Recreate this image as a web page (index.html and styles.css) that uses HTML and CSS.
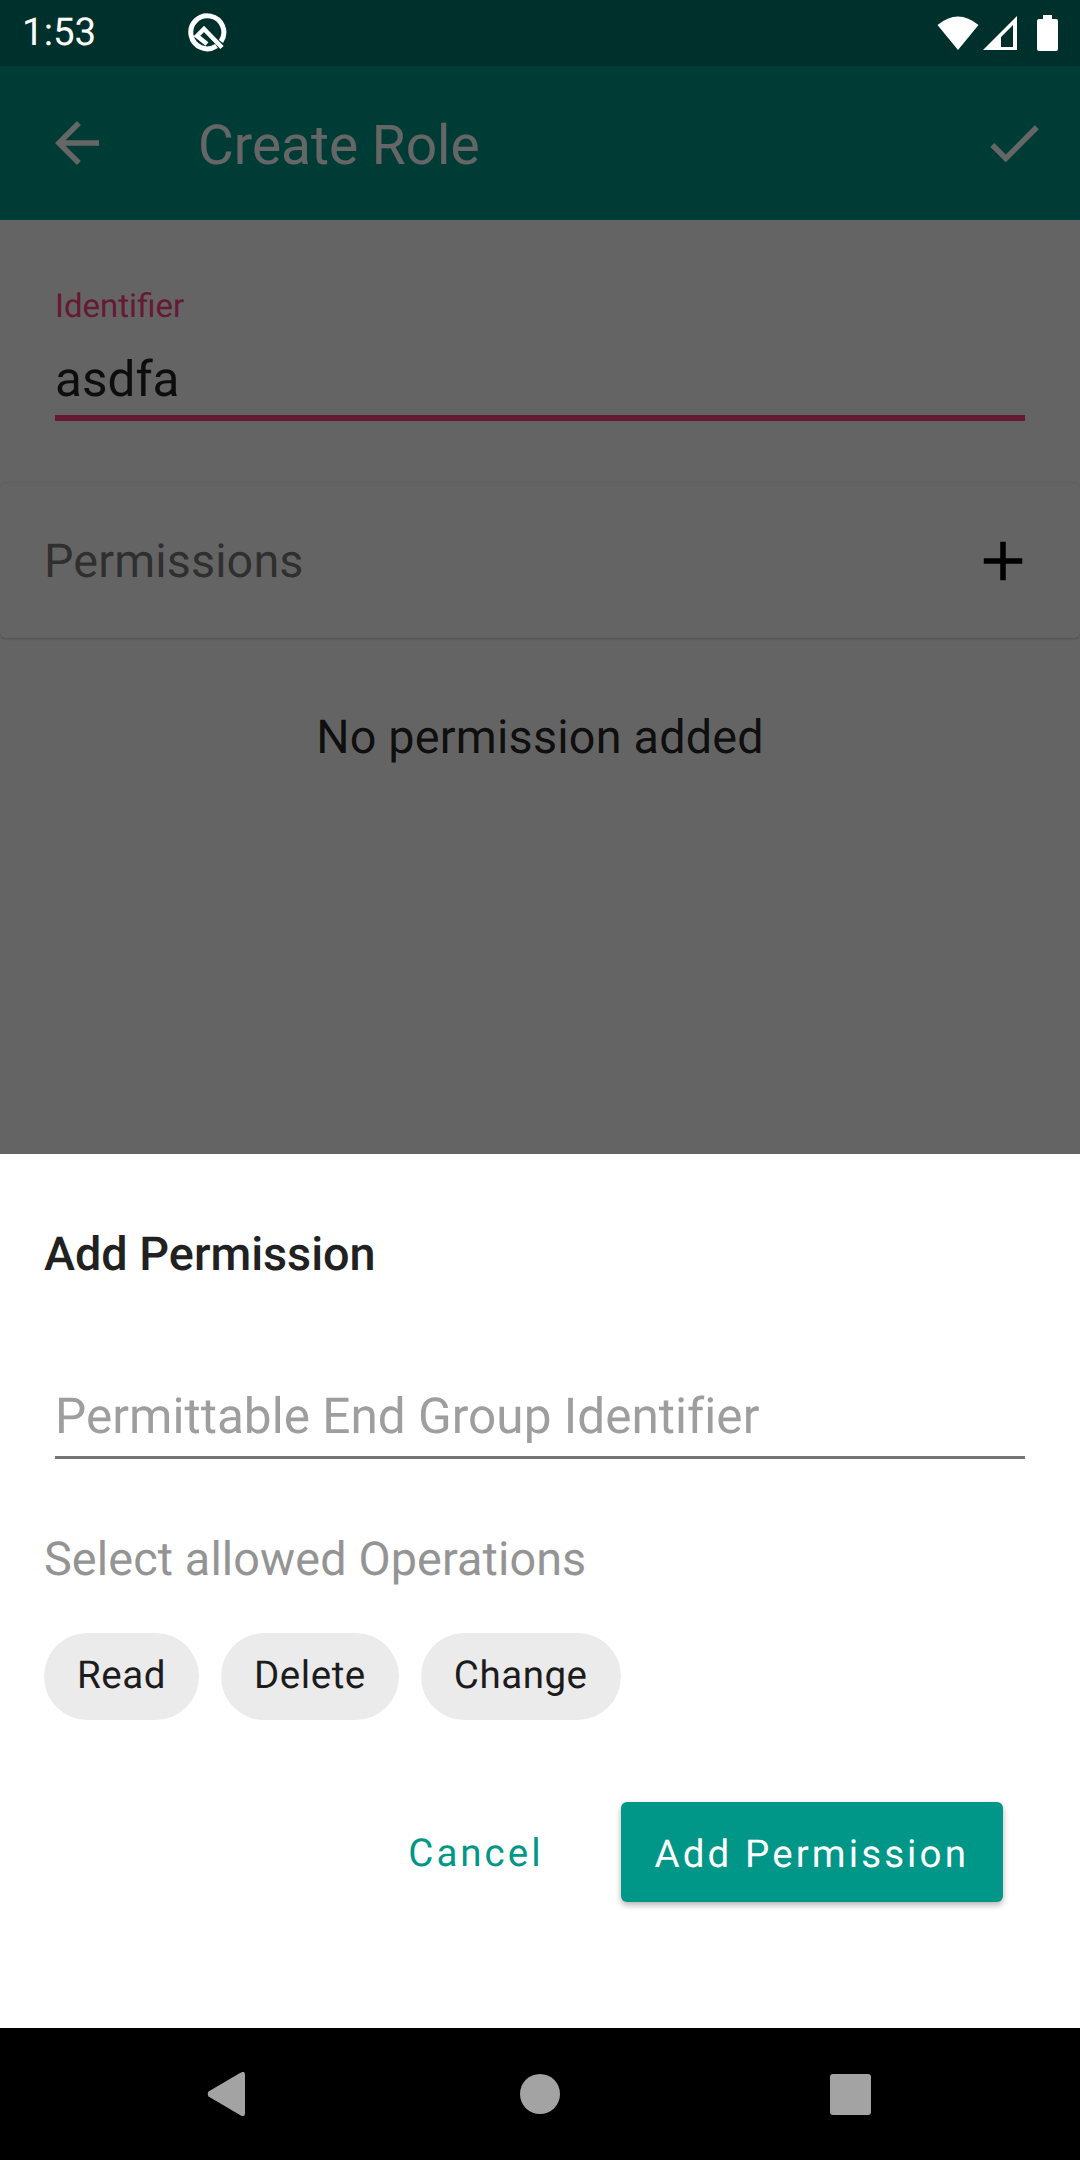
FILE: index.html
```html
<!DOCTYPE html>
<html lang="en">
<head>
<meta charset="utf-8">
<title>Create Role</title>
<link rel="stylesheet" href="styles.css">
</head>
<body>
<div class="screen">
  <div class="behind">
    <div class="status-bar">
      <div class="status-left">
        <span class="time">1:53</span>
        <svg class="q-icon" viewBox="0 0 40 40" width="40" height="40"><path class="q-ring" d="M29.500 33A16.500 16.500 0 1 1 34 28.500"/><path class="q-mark" d="M35 34.500 17 16 10 23 20 31"/></svg>
      </div>
      <div class="status-right">
        <svg viewBox="0 0 42 36" width="42" height="36"><path class="white" d="M21 35 0.500 10Q21 -7 41.500 10z"/></svg>
        <svg class="signal" viewBox="0 0 34 34" width="34" height="34"><path class="white" fill-rule="evenodd" d="M34 0V34H0zM30 9 18 21V31H30z"/></svg>
        <svg class="battery" viewBox="0 0 21 36" width="21" height="36"><path class="white" d="M6 0h9v4h4a2 2 0 0 1 2 2v28a2 2 0 0 1-2 2H2a2 2 0 0 1-2-2V6a2 2 0 0 1 2-2h4z"/></svg>
      </div>
    </div>
    <header class="app-bar">
      <svg class="bar-icon" viewBox="0 0 24 24" width="66" height="66"><path d="M20 11H7.830l5.590-5.590L12 4l-8 8 8 8 1.410-1.410L7.830 13H20v-2z"/></svg>
      <h1 class="bar-title">Create Role</h1>
      <svg class="bar-icon" viewBox="0 0 24 24" width="66" height="66"><path d="M9 16.170L4.830 12l-1.420 1.410L9 19 21 7l-1.410-1.410z"/></svg>
    </header>
    <main class="content">
      <div class="field">
        <div class="field-label">Identifier</div>
        <div class="field-value">asdfa</div>
      </div>
      <section class="card">
        <span class="card-title">Permissions</span>
        <svg class="add-icon" viewBox="0 0 24 24" width="66" height="66"><path d="M19 13h-6v6h-2v-6H5v-2h6V5h2v6h6v2z"/></svg>
      </section>
      <p class="empty">No permission added</p>
    </main>
    <div class="scrim"></div>
  </div>
  <section class="sheet">
    <h2 class="sheet-title">Add Permission</h2>
    <div class="input">Permittable End Group Identifier</div>
    <div class="ops-label">Select allowed Operations</div>
    <div class="chips">
      <span class="chip">Read</span>
      <span class="chip">Delete</span>
      <span class="chip">Change</span>
    </div>
    <div class="actions">
      <span class="btn-text">Cancel</span>
      <span class="btn-primary">Add Permission</span>
    </div>
  </section>
  <nav class="nav-bar">
    <svg viewBox="0 0 38 44" width="38" height="44"><path class="nav" d="M38 3V41Q38 46 33 43L1.500 24.500Q0 22 1.500 19.500L33 1Q38 -2 38 3z"/></svg>
    <svg viewBox="0 0 40 40" width="40" height="40"><circle class="nav" cx="20" cy="20" r="20"/></svg>
    <svg viewBox="0 0 41 41" width="41" height="41"><rect class="nav" width="41" height="41" rx="3"/></svg>
  </nav>
</div>
</body>
</html>
```
FILE: styles.css
```css
* { box-sizing: border-box; }
html, body { margin: 0; padding: 0; }
body { font-family: Roboto, "Liberation Sans", sans-serif; background: #000; text-rendering: geometricPrecision; }
.screen { width: 1080px; height: 2160px; display: flex; flex-direction: column; overflow: hidden; }
.behind { position: relative; height: 1154px; background: #fafafa; flex: none; }
.scrim { position: absolute; inset: 0; background: rgba(0,0,0,.6); }

.status-bar { position: relative; z-index: 2; height: 66px; display: flex; align-items: center; justify-content: space-between; padding: 0 22px 0 22px; }
.behind::before { content: ""; position: absolute; left: 0; top: 0; width: 100%; height: 66px; background: #00796b; }
.status-left { display: flex; align-items: center; }
.time { font-size: 38.5px; color: #fff; width: 165px; line-height: 70px; }
.q-icon { display: block; }
.status-right { display: flex; align-items: center; }
.status-right svg { display: block; }
.signal { margin-left: 4px; }
.battery { margin-left: 20px; }
.white { fill: #fff; }
.q-ring { fill: none; stroke: #fff; stroke-width: 5; }
.q-mark { fill: none; stroke: #fff; stroke-width: 4.500; }

.app-bar { height: 154px; background: #009688; display: flex; align-items: center; padding: 0 33px 0 44px; }
.bar-icon { fill: #fff; flex: none; }
.bar-title { flex: 1; margin: 6px 0 0 88px; font-size: 55px; font-weight: 400; color: #fff; line-height: 66px; }

.field { padding: 66px 55px 0; }
.field-label { font-size: 33px; line-height: 42px; color: #ff4081; }
.field-value { font-size: 49.5px; line-height: 62px; margin-top: 21px; height: 72px; color: rgba(0,0,0,.87); border-bottom: 6px solid #ff4081; }
.card { margin-top: 62px; height: 155px; background: #fafafa; border-radius: 6px; box-shadow: 0 0 2px rgba(0,0,0,.14), 0 2px 2px rgba(0,0,0,.1); display: flex; align-items: center; justify-content: space-between; padding: 0 44px; }
.card-title { font-size: 46.75px; letter-spacing: .1px; line-height: 58px; padding-top: 2px; color: rgba(0,0,0,.54); }
.add-icon { fill: #000; }
.empty { margin: 73px 0 0; text-align: center; font-size: 46.75px; letter-spacing: .2px; line-height: 54px; color: rgba(0,0,0,.87); }

.sheet { height: 874px; background: #fff; flex: none; padding-top: 73px; }
.sheet-title { margin: 0 44px; font-size: 46.75px; line-height: 56px; font-weight: 500; color: #212121; }
.input { margin: 68px 55px 0; height: 108px; padding-top: 36px; border-bottom: 3px solid #757575; font-size: 49.5px; letter-spacing: .02px; line-height: 60px; color: #9e9e9e; }
.ops-label { margin: 71px 44px 0; font-size: 46.75px; letter-spacing: .11px; line-height: 60px; color: #949494; }
.chips { margin: 43px 44px 0; display: flex; gap: 22px; }
.chip { height: 87px; border-radius: 44px; background: #ebebeb; padding: 0 33px; font-size: 38.5px; letter-spacing: .55px; line-height: 85px; color: #1c1c1c; }
.actions { margin: 82px 77px 0 0; display: flex; justify-content: flex-end; align-items: center; gap: 77px; }
.btn-text { font-size: 38.5px; letter-spacing: 3px; line-height: 50px; padding-top: 4px; color: #009688; }
.btn-primary { height: 100px; line-height: 106px; padding: 0 34px; border-radius: 6px; background: #009688; color: #fff; font-size: 38.5px; letter-spacing: 3.1px; box-shadow: 0 3px 6px rgba(0,0,0,.3); }

.nav-bar { flex: 1; background: #000; display: flex; align-items: center; padding-left: 207px; }
.nav-bar svg { display: block; flex: none; }
.nav-bar svg:nth-child(2) { margin-left: 275px; }
.nav-bar svg:nth-child(3) { margin-left: 270px; }
.nav { fill: #a3a3a3; }
```
